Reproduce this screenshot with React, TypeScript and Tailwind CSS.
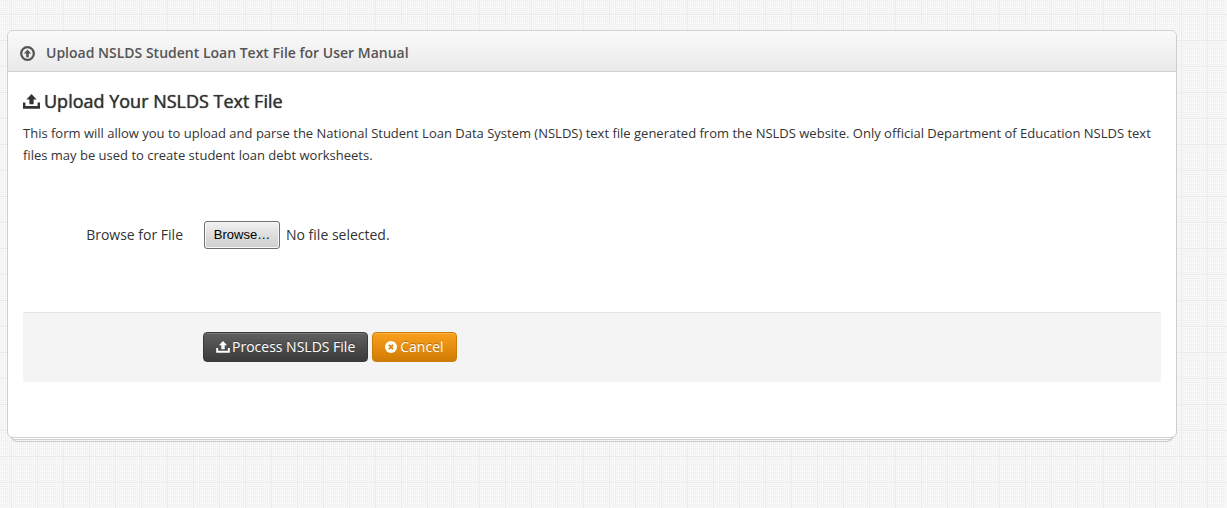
import { useRef, useState } from "react";

function TrayUploadIcon({ className }: { className: string }) {
  return (
    <svg viewBox="0 0 17 15" fill="currentColor" className={className} aria-hidden="true">
      <path d="M8.5 0 13.6 5.4H10.6V10.2H6.4V5.4H3.4Z" />
      <path d="M0 8.6H2.4V12.1H14.6V8.6H17V14.8H0Z" />
    </svg>
  );
}

function CircleUpIcon({ className }: { className: string }) {
  return (
    <svg viewBox="0 0 14 14" fill="none" className={className} aria-hidden="true">
      <circle cx="7" cy="7" r="5.9" stroke="currentColor" strokeWidth="2.1" />
      <path d="M7 3.2 10.4 6.9H8.2V10.6H5.8V6.9H3.6Z" fill="currentColor" />
    </svg>
  );
}

function CircleCrossIcon({ className }: { className: string }) {
  return (
    <svg viewBox="0 0 12 12" className={className} aria-hidden="true">
      <circle cx="6" cy="6" r="6" fill="#fff" />
      <path d="M3.9 3.9 8.1 8.1M8.1 3.9 3.9 8.1" stroke="#e18a0c" strokeWidth="2" />
    </svg>
  );
}

export default function App() {
  const fileRef = useRef<HTMLInputElement>(null);
  const [fileName, setFileName] = useState("No file selected.");

  const reset = () => {
    if (fileRef.current) fileRef.current.value = "";
    setFileName("No file selected.");
  };

  return (
    <div className="relative min-h-screen bg-[#f8f8f8] pt-[30px] pr-[50px] pb-16 pl-[7px] font-['Open_Sans','Noto_Sans',sans-serif] text-[#333]">
      <svg className="absolute inset-0 size-full" aria-hidden="true">
        <defs>
          <pattern id="weave" width="26" height="26" x="11" y="14" patternUnits="userSpaceOnUse">
            <path
              d="M0 2.5H26M0 4.5H26M0 6.5H26M0 8.5H26M0 10.5H26M0 12.5H26M0 14.5H26M0 16.5H26M0 18.5H26M0 20.5H26M0 22.5H26M0 24.5H26"
              stroke="#ececec"
              strokeDasharray="1 1"
            />
            <path d="M0 .5H26M.5 0V26" stroke="#ebebeb" />
          </pattern>
        </defs>
        <rect width="100%" height="100%" fill="url(#weave)" />
      </svg>

      <main className="relative">
        <section className="relative z-10 rounded-md border border-[#cfcfcf] bg-white">
          <header className="flex h-[41px] items-center gap-[11px] rounded-t-md border-b border-[#cfcfcf] bg-linear-to-b from-[#fafafa] to-[#e9e9e9] px-3 pt-1 text-[#555]">
            <CircleUpIcon className="size-[15px]" />
            <h1 className="text-sm font-semibold">Upload NSLDS Student Loan Text File for User Manual</h1>
          </header>

          <div className="px-[15px] pt-[15px] pb-[55px]">
            <h2 className="flex items-center gap-1 text-lg leading-7 font-normal text-shadow-[0_0_1px_#333]">
              <TrayUploadIcon className="h-[15px] w-[17px]" />
              Upload Your NSLDS Text File
            </h2>
            <p className="mt-[7px] text-[13px] leading-[22px]">
              This form will allow you to upload and parse the National Student Loan Data System (NSLDS) text file
              generated from the NSLDS website. Only official Department of Education NSLDS text files may be used to
              create student loan debt worksheets.
            </p>

            <form onSubmit={(e) => e.preventDefault()} className="mt-[55px] text-sm">
              <div className="flex items-center gap-[21px]">
                <label htmlFor="nslds-file" className="w-40 text-right">
                  Browse for File
                </label>
                <div className="flex items-center gap-1.5">
                  <input
                    ref={fileRef}
                    id="nslds-file"
                    type="file"
                    className="sr-only"
                    onChange={(e) => setFileName(e.target.files?.[0]?.name ?? "No file selected.")}
                  />
                  <button
                    type="button"
                    onClick={() => fileRef.current?.click()}
                    className="h-7 w-[76px] rounded-[3px] border border-[#707070] bg-linear-to-b from-[#f2f2f2] from-0% via-[#dddddd] via-50% to-[#cfcfcf] font-['Liberation_Sans',Arial,sans-serif] text-[13px] text-black shadow-[inset_0_0_0_1px_#f8f8f8]"
                  >
                    Browse…
                  </button>
                  <span>{fileName}</span>
                </div>
              </div>

              <div className="mt-[63px] flex gap-1 border-t border-[#e5e5e5] bg-[#f4f4f4] pt-[19px] pb-5 pl-[180px]">
                <button
                  type="submit"
                  className="flex h-[30px] items-center gap-0.5 rounded-sm border border-[#3a3a3a] bg-linear-to-b from-[#606060] to-[#3b3b3b] px-3 text-white shadow-[inset_0_1px_0_#7a7a7a] text-shadow-[0_-1px_0_rgba(0,0,0,0.25)]"
                >
                  <TrayUploadIcon className="h-3 w-[14px]" />
                  Process NSLDS File
                </button>
                <button
                  type="button"
                  onClick={reset}
                  className="flex h-[30px] items-center gap-[3px] rounded-sm border border-[#cc7d08] bg-linear-to-b from-[#fba01c] to-[#d07c04] px-3 text-white shadow-[inset_0_1px_0_#ffb64d] text-shadow-[0_-1px_0_rgba(0,0,0,0.25)]"
                >
                  <CircleCrossIcon className="size-3" />
                  Cancel
                </button>
              </div>
            </form>
          </div>
        </section>
        <div className="mx-0.5 -mt-1 h-1.5 rounded-b-md border border-t-0 border-[#cfcfcf] bg-white" />
        <div className="mx-1 -mt-1 h-1.5 rounded-b-md border border-t-0 border-[#cfcfcf]" />
      </main>
    </div>
  );
}
